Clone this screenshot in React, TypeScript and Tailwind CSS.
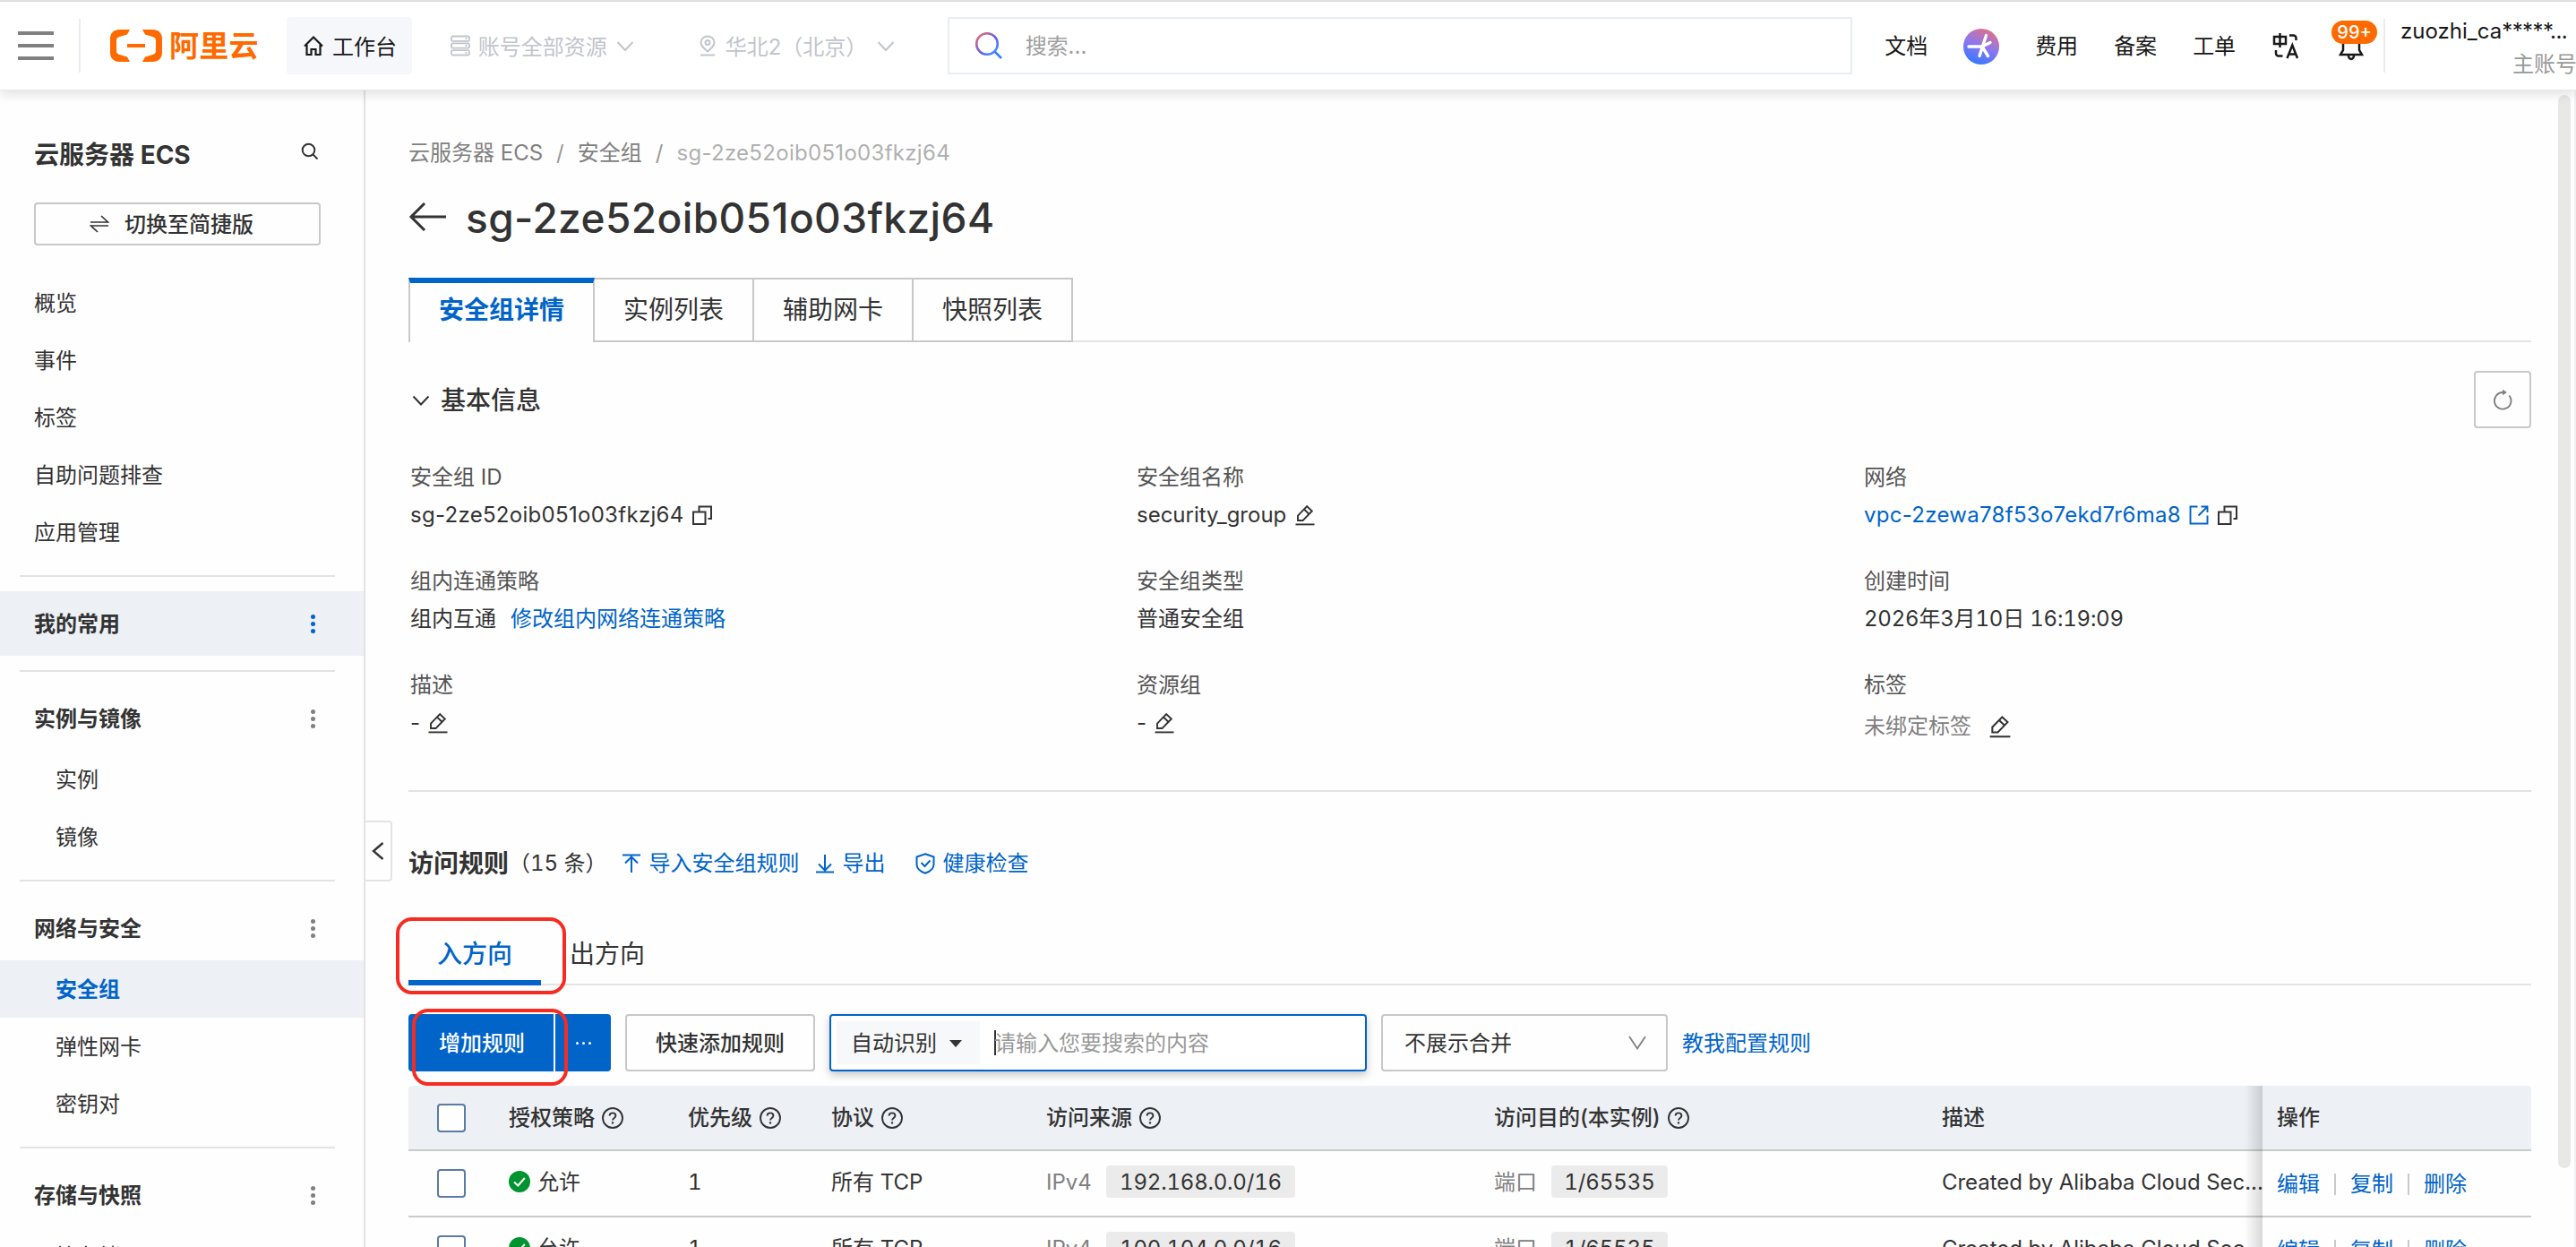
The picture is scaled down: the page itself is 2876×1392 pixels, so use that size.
import type { ReactNode } from 'react';

interface IconProps { className?: string }

const CopyIcon = ({ className = 'size-6' }: IconProps) => (
  <svg viewBox="0 0 24 24" className={className} fill="none" stroke="currentColor" strokeWidth="2">
    <path d="M2 8.5h13.5V22H2z" />
    <path d="M8.5 8V2.5H22V16h-3.5" />
  </svg>
);

const EditIcon = ({ className = 'size-6' }: IconProps) => (
  <svg viewBox="0 0 24 24" className={className} fill="none" stroke="currentColor" strokeWidth="1.9">
    <path d="M14.2 2.2l5.6 5.3L9.6 18H4v-5.3z" />
    <path d="M11 5.5l5.4 5.2" />
    <path d="M1.5 22.4h21" />
  </svg>
);

const ExternalIcon = () => (
  <svg viewBox="0 0 24 24" className="size-6" fill="none" stroke="currentColor" strokeWidth="1.9">
    <path d="M10.5 2.5h-8v19h19v-9" />
    <path d="M14.5 2.5h7V9M21.5 2.5L11.5 12.5" />
  </svg>
);

const HelpIcon = () => (
  <svg viewBox="0 0 26 26" className="size-[26px]" fill="none" stroke="currentColor" strokeWidth="1.9">
    <circle cx="13" cy="13" r="11" />
    <path d="M9.6 10.6c0-2 1.5-3.2 3.4-3.2s3.4 1.2 3.4 3c0 2.4-3.4 2.6-3.4 5.1" />
    <path d="M13 17.3v2.2" strokeWidth="2.2" />
  </svg>
);

const Chevron = ({ className = '' }: IconProps) => (
  <svg viewBox="0 0 20 12" className={className} fill="none" stroke="currentColor" strokeWidth="2">
    <path d="M1.5 1.5L10 10.5l8.5-9" />
  </svg>
);

const Dots = ({ active = false }: { active?: boolean }) => (
  <div className={`flex flex-col gap-[3px] ${active ? 'text-[#0064c8]' : 'text-[#808080]'}`}>
    <i className="block size-[5px] rounded-full bg-current" />
    <i className="block size-[5px] rounded-full bg-current" />
    <i className="block size-[5px] rounded-full bg-current" />
  </div>
);

function Header() {
  return (
    <header className="relative z-20 flex h-[101px] shrink-0 items-center border-t-2 border-b border-t-[#e0e0e0] border-b-[#e6e9ee] bg-white pl-5 text-[24px] whitespace-nowrap text-[#181818] shadow-[0_4px_12px_rgba(0,0,0,0.12)]">
      <div className="flex w-10 flex-col gap-2.5">
        <i className="h-1 bg-[#808080]" />
        <i className="h-1 bg-[#808080]" />
        <i className="h-1 bg-[#808080]" />
      </div>
      <i className="ml-7 h-[60px] w-0.5 bg-[#e9ebf0]" />
      <svg viewBox="0 0 58 36" className="ml-[33px] h-9 w-[58px]" fill="#ff6a00">
        <path d="M22 0H11C4 0 0 4 0 10v16c0 6 4 10 11 10h11l-3-5.5-8.5-2.5C8 27.3 7 26 7 24V12c0-2 1-3.3 3.5-4L19 5.5z" />
        <path d="M36 0h11c7 0 11 4 11 10v16c0 6-4 10-11 10H36l3-5.5 8.5-2.5c2.5-.7 3.5-2 3.5-4V12c0-2-1-3.3-3.5-4L39 5.5z" />
        <path d="M19 16h20v4H19z" />
      </svg>
      <span className="ml-2 w-[100px] text-[33px] leading-none font-bold tracking-[0.3px] text-[#ff6a00]">阿里云</span>
      <div className="ml-[31px] flex h-16 w-[140px] items-center rounded bg-[#f6f7fb] pl-[18px]">
        <svg viewBox="0 0 24 24" className="size-6" fill="none" stroke="currentColor" strokeWidth="2.2">
          <path d="M2 12.5L12 2.5l10 10M4.500 11v11h5v-6h5v6h5V11" />
        </svg>
        <span className="ml-[9px] pt-[3px]">工作台</span>
      </div>
      <div className="ml-[42px] flex w-[208px] items-center text-[#c1c5cc]">
        <svg viewBox="0 0 24 24" className="size-6 shrink-0" fill="none" stroke="currentColor" strokeWidth="1.8">
          <rect x="2" y="1.5" width="20" height="5.4" rx="1.5" />
          <rect x="2" y="9.3" width="20" height="5.4" rx="1.5" />
          <rect x="2" y="17.1" width="20" height="5.4" rx="1.5" />
          <path d="M17.5 4.2h2M17.5 12h2M17.5 19.8h2" />
        </svg>
        <span className="ml-2 pt-[3px]">账号全部资源</span>
        <Chevron className="ml-2.5 h-[13px] w-5 shrink-0" />
      </div>
      <div className="ml-[68px] flex w-[221px] items-center text-[#c1c5cc]">
        <svg viewBox="0 0 24 24" className="size-6" fill="none" stroke="currentColor" strokeWidth="2">
          <path d="M12 18.5C7.5 14.5 4.5 12 4.5 8.5a7.5 7 0 0 1 15 0c0 3.5-3 6-7.5 10zM4 22.5h16" />
          <circle cx="12" cy="8.5" r="2.5" />
        </svg>
        <span className="ml-2 pt-[3px]">华北2（北京）</span>
        <Chevron className="ml-auto h-[13px] w-5" />
      </div>
      <div className="ml-[59px] flex h-16 w-[1011px] items-center border-2 border-[#e8edf2] pl-7">
        <svg viewBox="0 0 32 32" className="size-8" fill="none" strokeWidth="2.6">
          <defs>
            <linearGradient id="lens" x1="0" y1="0" x2="1" y2="1">
              <stop offset="0" stopColor="#ff6e5a" />
              <stop offset="0.55" stopColor="#5a5cf5" />
              <stop offset="1" stopColor="#4aa0ff" />
            </linearGradient>
          </defs>
          <circle cx="14" cy="14" r="11.8" stroke="url(#lens)" />
          <path d="M22.5 22.5l7.5 7.5" stroke="#2f83ff" />
        </svg>
        <span className="ml-[25px] pt-0.5 text-[#a0a0a0]">搜索...</span>
      </div>
      <span className="ml-9 pt-0.5">文档</span>
      <svg viewBox="0 0 40 40" className="ml-10 mt-0.5 size-10" fill="none">
        <defs>
          <linearGradient id="ai" x1="0.7" y1="0" x2="0.3" y2="1">
            <stop offset="0" stopColor="#e0708a" />
            <stop offset="0.5" stopColor="#8a78f0" />
            <stop offset="1" stopColor="#2f78ff" />
          </linearGradient>
        </defs>
        <circle cx="20" cy="20" r="20" fill="url(#ai)" />
        <path d="M25.5 7.5L18 30.5M6 20h15l9-4.5M21 20l6.500 10.5" stroke="#fff" strokeWidth="3.4" strokeLinecap="round" strokeLinejoin="round" />
      </svg>
      <span className="ml-10 pt-0.5">费用</span>
      <span className="ml-10 pt-0.5">备案</span>
      <span className="ml-10 pt-0.5">工单</span>
      <svg viewBox="0 0 30 30" className="ml-[41px] size-[30px]" fill="none" stroke="currentColor" strokeWidth="2.5">
        <path d="M2 5h13v8H2zM8.5 1v16M19 3.5h4.5a3 3 0 0 1 3 3V9M4 20v3.5a3 3 0 0 0 3 3h4.5" />
        <path d="M16.5 29l5.8-14.5L28 29M18.5 24.5h7.7" />
      </svg>
      <div className="relative ml-[44px] h-[34px] w-7">
        <svg viewBox="0 0 28 34" className="h-[34px] w-7" fill="none" stroke="currentColor" strokeWidth="2.5">
          <path d="M5 12v10l-3 5h24l-3-5V12a9 9 0 0 0-18 0z" />
          <path d="M11 28a3 4 0 0 0 6 0" />
        </svg>
        <span className="absolute -top-[11px] -left-[8px] flex h-[26px] w-[51px] items-center justify-center rounded-full bg-[#ff6a00] text-[20px] font-medium text-white">99+</span>
      </div>
      <i className="ml-[22px] h-[60px] w-0.5 bg-[#e9ebf0]" />
      <div className="ml-[17px] h-[64px] w-[196px] overflow-hidden pt-0.5">
        <div className="text-[24px] leading-[28px]">zuozhi_ca<span className="tracking-[-0.6px]">*****...</span></div>
        <div className="mt-[9px] ml-[125px] leading-[28px] text-[#999]">主账号</div>
      </div>
    </header>
  );
}

const topMenu = ['概览', '事件', '标签', '自助问题排查', '应用管理'];

const groups = [
  { title: '实例与镜像', items: ['实例', '镜像'] },
  { title: '网络与安全', items: ['安全组', '弹性网卡', '密钥对'] },
  { title: '存储与快照', items: ['块存储'] },
];

const Rule = () => <div className="mx-[22px] my-4 h-0.5 w-[352px] shrink-0 bg-[#e3e3e3]" />;

function Sidebar() {
  return (
    <aside className="flex w-[408px] shrink-0 flex-col border-r-2 border-[#e3e3e3] pt-[51px] text-[24px] text-[#333]">
      <div className="flex h-10 shrink-0 items-center justify-between pr-[50px] pl-[38px]">
        <span className="pt-0.5 text-[28px] font-bold">云服务器 ECS</span>
        <svg viewBox="0 0 20 20" className="-mt-1.5 size-5" fill="none" stroke="currentColor" strokeWidth="2">
          <circle cx="8.5" cy="8.5" r="6.8" />
          <path d="M13.5 13.5l5 5" />
        </svg>
      </div>
      <div className="mt-[34px] ml-[38px] flex h-12 w-[320px] shrink-0 items-center rounded border-2 border-[#c8c8c8] pl-[60px] font-medium">
        <svg viewBox="0 0 22 22" className="size-[22px]" fill="none" stroke="currentColor" strokeWidth="1.7">
          <path d="M1 9h19.5l-7.5-7M21 13H1.5l7.5 7" />
        </svg>
        <span className="ml-[17px] pt-0.5">切换至简捷版</span>
      </div>
      <div className="mt-8">
        {topMenu.map((t) => (
          <div key={t} className="flex h-16 items-center pt-0.5 pl-[38px]">{t}</div>
        ))}
      </div>
      <Rule />
      <div className="flex h-[72px] shrink-0 items-center justify-between bg-[#edf0f5] pr-[54px] pl-[38px] font-bold">
        <span className="pt-0.5">我的常用</span>
        <Dots active />
      </div>
      {groups.map((g) => (
        <div key={g.title} className="flex shrink-0 flex-col">
          <Rule />
          <div className="flex h-[72px] items-center justify-between pr-[54px] pl-[38px] font-bold">
            <span className="pt-0.5">{g.title}</span>
            <Dots />
          </div>
          {g.items.map((t) => (
            <div
              key={t}
              className={`flex h-16 items-center pt-0.5 pl-[62px] ${t === '安全组' ? 'bg-[#edf0f5] font-bold text-[#0064c8]' : ''}`}
            >
              {t}
            </div>
          ))}
        </div>
      ))}
    </aside>
  );
}

function Field({ label, children }: { label: string; children: ReactNode }) {
  return (
    <div className="h-[116px] pl-0.5">
      <div className="flex h-[42px] items-center pt-0.5 text-[#555]">{label}</div>
      <div className="flex h-[43px] items-center whitespace-nowrap">{children}</div>
    </div>
  );
}

function BasicInfo() {
  return (
    <section>
      <div className="mt-8 flex h-16 items-center justify-between">
        <div className="flex items-center text-[28px] font-medium">
          <Chevron className="mt-0.5 ml-1 h-3 w-5" />
          <span className="ml-3 pt-0.5">基本信息</span>
        </div>
        <button className="flex size-16 items-center justify-center rounded border-2 border-[#c8c8c8] text-[#808080]">
          <svg viewBox="0 0 24 24" className="size-6" fill="none" stroke="currentColor" strokeWidth="1.9">
            <path d="M19.5 7.5A9.3 9.3 0 1 1 12.5 4" />
            <path d="M12 .8l5 3.2-5 3.2z" fill="currentColor" stroke="none" />
          </svg>
        </button>
      </div>
      <div className="mt-[33px] grid grid-cols-[811px_812px_1fr]">
        <Field label="安全组 ID">
          <span className="tracking-[0.3px]">sg-2ze52oib051o03fkzj64</span>
          <CopyIcon className="ml-2 size-6" />
        </Field>
        <Field label="安全组名称">
          security_group
          <EditIcon className="ml-[9px] size-6" />
        </Field>
        <Field label="网络">
          <span className="tracking-[0.3px] text-[#0064c8]">vpc-2zewa78f53o7ekd7r6ma8</span>
          <span className="ml-2 text-[#0064c8]"><ExternalIcon /></span>
          <CopyIcon className="ml-2 size-6" />
        </Field>
        <Field label="组内连通策略">
          组内互通<span className="ml-4 text-[#0064c8]">修改组内网络连通策略</span>
        </Field>
        <Field label="安全组类型">普通安全组</Field>
        <Field label="创建时间">
          <span className="tracking-[-0.2px] tabular-nums">2026年3月10日 16:19:09</span>
        </Field>
        <Field label="描述">
          -<EditIcon className="ml-2 size-6" />
        </Field>
        <Field label="资源组">
          -<EditIcon className="ml-2 size-6" />
        </Field>
        <Field label="标签">
          <span className="mt-2 text-[#808080]">未绑定标签</span>
          <EditIcon className="mt-2 ml-[19px] size-[26px]" />
        </Field>
      </div>
      <div className="mt-[23px] h-0.5 bg-[#e3e3e3]" />
    </section>
  );
}

const rules = [
  { action: '允许', priority: 1, protocol: '所有 TCP', source: '192.168.0.0/16', port: '1/65535', desc: 'Created by Alibaba Cloud Sec...' },
  { action: '允许', priority: 1, protocol: '所有 TCP', source: '100.104.0.0/16', port: '1/65535', desc: 'Created by Alibaba Cloud Sec...' },
];

const cols = 'grid grid-cols-[96px_200px_160px_240px_500px_500px_374px_1fr]';

const Checkbox = () => <div className="ml-8 size-8 rounded border-2 border-[#5a7ba3] bg-white" />;

const Th = ({ children, help }: { children: ReactNode; help?: boolean }) => (
  <div className="flex items-center gap-[7px] pl-4">
    {children}
    {help && <HelpIcon />}
  </div>
);

function RuleTable() {
  return (
    <div className="relative mt-4">
      <div className={`${cols} h-[73px] rounded-t border-b-2 border-[#c8cacc] bg-[#edf0f5] font-medium`}>
        <div className="flex items-center"><Checkbox /></div>
        <Th help>授权策略</Th>
        <Th help>优先级</Th>
        <Th help>协议</Th>
        <Th help>访问来源</Th>
        <Th help>访问目的(本实例)</Th>
        <Th>描述</Th>
        <Th>操作</Th>
      </div>
      {rules.map((r) => (
        <div key={r.source} className={`${cols} h-[74px] border-b-2 border-[#c8cacc]`}>
          <div className="flex items-center"><Checkbox /></div>
          <div className="flex items-center pb-1 pl-4">
            <svg viewBox="0 0 24 24" className="size-6">
              <circle cx="12" cy="12" r="12" fill="#009431" />
              <path d="M6 12.5l4.3 4 7.5-8.5" fill="none" stroke="#fff" strokeWidth="2" />
            </svg>
            <span className="ml-2 pt-0.5">{r.action}</span>
          </div>
          <div className="flex items-center pb-[3px] pl-4 tabular-nums">{r.priority}</div>
          <div className="flex items-center pb-[3px] pl-4">{r.protocol}</div>
          <div className="flex items-center pb-1 pl-4">
            <span className="w-[67px] pt-px text-[#808080]">IPv4</span>
            <span className="flex h-9 w-[211px] items-center justify-center rounded bg-[#ebebeb] pt-px tracking-[-0.2px] tabular-nums">{r.source}</span>
          </div>
          <div className="flex items-center pb-1 pl-4">
            <span className="w-16 pt-0.5 text-[#808080]">端口</span>
            <span className="flex h-9 w-[130px] items-center justify-center rounded bg-[#ebebeb] pt-px tracking-[-0.1px] tabular-nums">{r.port}</span>
          </div>
          <div className="flex items-center pb-[3px] pl-4 tracking-[-0.05px] whitespace-nowrap">{r.desc}</div>
          <div className="flex items-center pt-px pl-4 text-[#0064c8]">
            编辑<i className="mx-4 h-6 w-0.5 bg-[#c8cacc]" />
            复制<i className="mx-4 h-6 w-0.5 bg-[#c8cacc]" />
            删除
          </div>
        </div>
      ))}
      {/* shade cast by the pinned column */}
      <div className="absolute inset-y-0 left-[2050px] w-5 bg-gradient-to-l from-black/15 to-transparent" />
    </div>
  );
}

function AccessRules() {
  return (
    <section>
      <div className="mt-[59px] flex h-10 items-center pt-0.5 text-[#0064c8]">
        <span className="text-[28px] font-bold text-[#333]">访问规则</span>
        <span className="text-[#333] tabular-nums">（15 条）</span>
        <svg viewBox="0 0 24 24" className="ml-[15px] size-6" fill="none" stroke="currentColor" strokeWidth="2">
          <path d="M2 2.5h20M12 22V5M5 11.5L12 4.5l7 7" />
        </svg>
        <span className="ml-2">导入安全组规则</span>
        <svg viewBox="0 0 24 24" className="ml-4 size-6" fill="none" stroke="currentColor" strokeWidth="2">
          <path d="M2 21.5h20M12 2v17M5 12.5l7 7 7-7" />
        </svg>
        <span className="ml-2">导出</span>
        <svg viewBox="0 0 24 24" className="ml-8 size-6" fill="none" stroke="currentColor" strokeWidth="2">
          <path d="M12 1.3l9.5 3.2v8.5c0 5-4.5 8-9.5 9.8-5-1.8-9.5-4.8-9.5-9.8V4.5z" />
          <path d="M7.5 11l4 4 6-6.5" />
        </svg>
        <span className="ml-2">健康检查</span>
      </div>

      <div className="relative mt-[45px] flex h-[72px] border-b-2 border-[#e3e3e3] text-[28px]">
        <div className="-mb-0.5 flex w-[148px] justify-center border-b-[6px] border-[#0064c8] pt-4 font-medium text-[#0064c8]">入方向</div>
        <div className="ml-[32px] pt-4">出方向</div>
        <div className="absolute -top-1 -left-3.5 h-[86px] w-[190px] rounded-[18px] border-4 border-[#f62b22]" />
      </div>

      <div className="relative mt-8 flex h-16">
        <button className="w-[162px] rounded-l bg-[#0064c8] pt-0.5 pl-0.5 font-medium text-white">增加规则</button>
        <button className="ml-0.5 flex w-[62px] items-center justify-center gap-1 rounded-r bg-[#0064c8]">
          <i className="size-[3px] rounded-full bg-white" />
          <i className="size-[3px] rounded-full bg-white" />
          <i className="size-[3px] rounded-full bg-white" />
        </button>
        <button className="ml-4 w-[212px] rounded border-2 border-[#c8c8c8] pt-0.5 font-medium">快速添加规则</button>
        <div className="ml-4 flex w-[600px] items-center rounded border-2 border-[#0064c8] bg-white pl-1.5 shadow-[0_4px_10px_rgba(0,0,0,0.22)]">
          <div className="flex h-12 w-[160px] items-center bg-[#f7f8fa] pt-0.5 pl-4">
            自动识别
            <i className="ml-3.5 border-x-[7px] border-t-[8px] border-x-transparent border-t-[#333]" />
          </div>
          <i className="ml-4 h-7 w-0.5 bg-[#333]" />
          <span className="-ml-0.5 pt-0.5 text-[#999]">请输入您要搜索的内容</span>
        </div>
        <div className="ml-4 flex w-[320px] items-center justify-between rounded border-2 border-[#c8c8c8] pr-[22px] pl-6">
          <span className="pt-0.5">不展示合并</span>
          <svg viewBox="0 0 20 16" className="h-4 w-5 text-[#808080]" fill="none" stroke="currentColor" strokeWidth="1.8">
            <path d="M1 1l9 13.5L19 1" />
          </svg>
        </div>
        <span className="ml-4 self-center pt-0.5 text-[#0064c8]">教我配置规则</span>
        <div className="absolute -top-1.5 left-1 h-[86px] w-[174px] rounded-[18px] border-4 border-[#f62b22]" />
      </div>
      <RuleTable />
    </section>
  );
}

const tabs = ['实例列表', '辅助网卡', '快照列表'];

export default function App() {
  return (
    <div className="flex h-[1392px] w-[2876px] flex-col overflow-hidden bg-[#fefefe] font-[Inter,'Noto_Sans_CJK_SC',sans-serif] text-[24px] leading-normal text-[#333]">
      <Header />
      <div className="relative flex min-h-0 flex-1">
        <Sidebar />
        <main className="w-[2418px] shrink-0 pt-[51px] pl-12">
          <div className="flex h-9 items-center pt-0.5 text-[#808080]">
            <span>云服务器 ECS</span>
            <span className="mx-[15px] text-[#999]">/</span>
            <span>安全组</span>
            <span className="mx-[15px] text-[#999]">/</span>
            <span className="tracking-[0.3px] text-[#b0b0b0]">sg-2ze52oib051o03fkzj64</span>
          </div>
          <div className="mt-6 flex h-[60px] items-center">
            <svg viewBox="0 0 42 32" className="h-8 w-[42px]" fill="none" stroke="currentColor" strokeWidth="3">
              <path d="M18 1L3 16l15 15M3 16h39" />
            </svg>
            <span className="ml-[22px] pt-0.5 text-[46px] font-medium tracking-[0.4px]">sg-2ze52oib051o03fkzj64</span>
          </div>
          <div className="mt-[38px] flex h-[72px] text-[28px]">
            <div className="w-[208px] border-t-[6px] border-r-2 border-l-2 border-x-[#c8c8c8] border-t-[#0064c8] pt-[9px] text-center font-bold text-[#0064c8]">安全组详情</div>
            {tabs.map((t) => (
              <div key={t} className="w-[178px] border-y-2 border-r-2 border-[#c8c8c8] pt-[13px] text-center">{t}</div>
            ))}
            <div className="flex-1 border-b-2 border-[#e3e3e3]" />
          </div>
          <BasicInfo />
          <AccessRules />
        </main>
        {/* sidebar handle */}
        <div className="absolute top-[815px] left-[406px] flex h-[68px] w-8 items-center justify-center rounded-r border-2 border-[#e3e3e3] bg-[#fefefe]">
          <svg viewBox="0 0 14 20" className="h-5 w-3.5" fill="none" stroke="currentColor" strokeWidth="2.4">
            <path d="M12.5 1L2 10l10.5 9" />
          </svg>
        </div>
        <div className="absolute top-[5px] right-[6px] h-[1198px] w-3.5 rounded-full bg-[#e8e8e8]" />
        <div className="absolute inset-y-0 right-0 w-0.5 bg-[#f0f0f5]" />
      </div>
    </div>
  );
}
